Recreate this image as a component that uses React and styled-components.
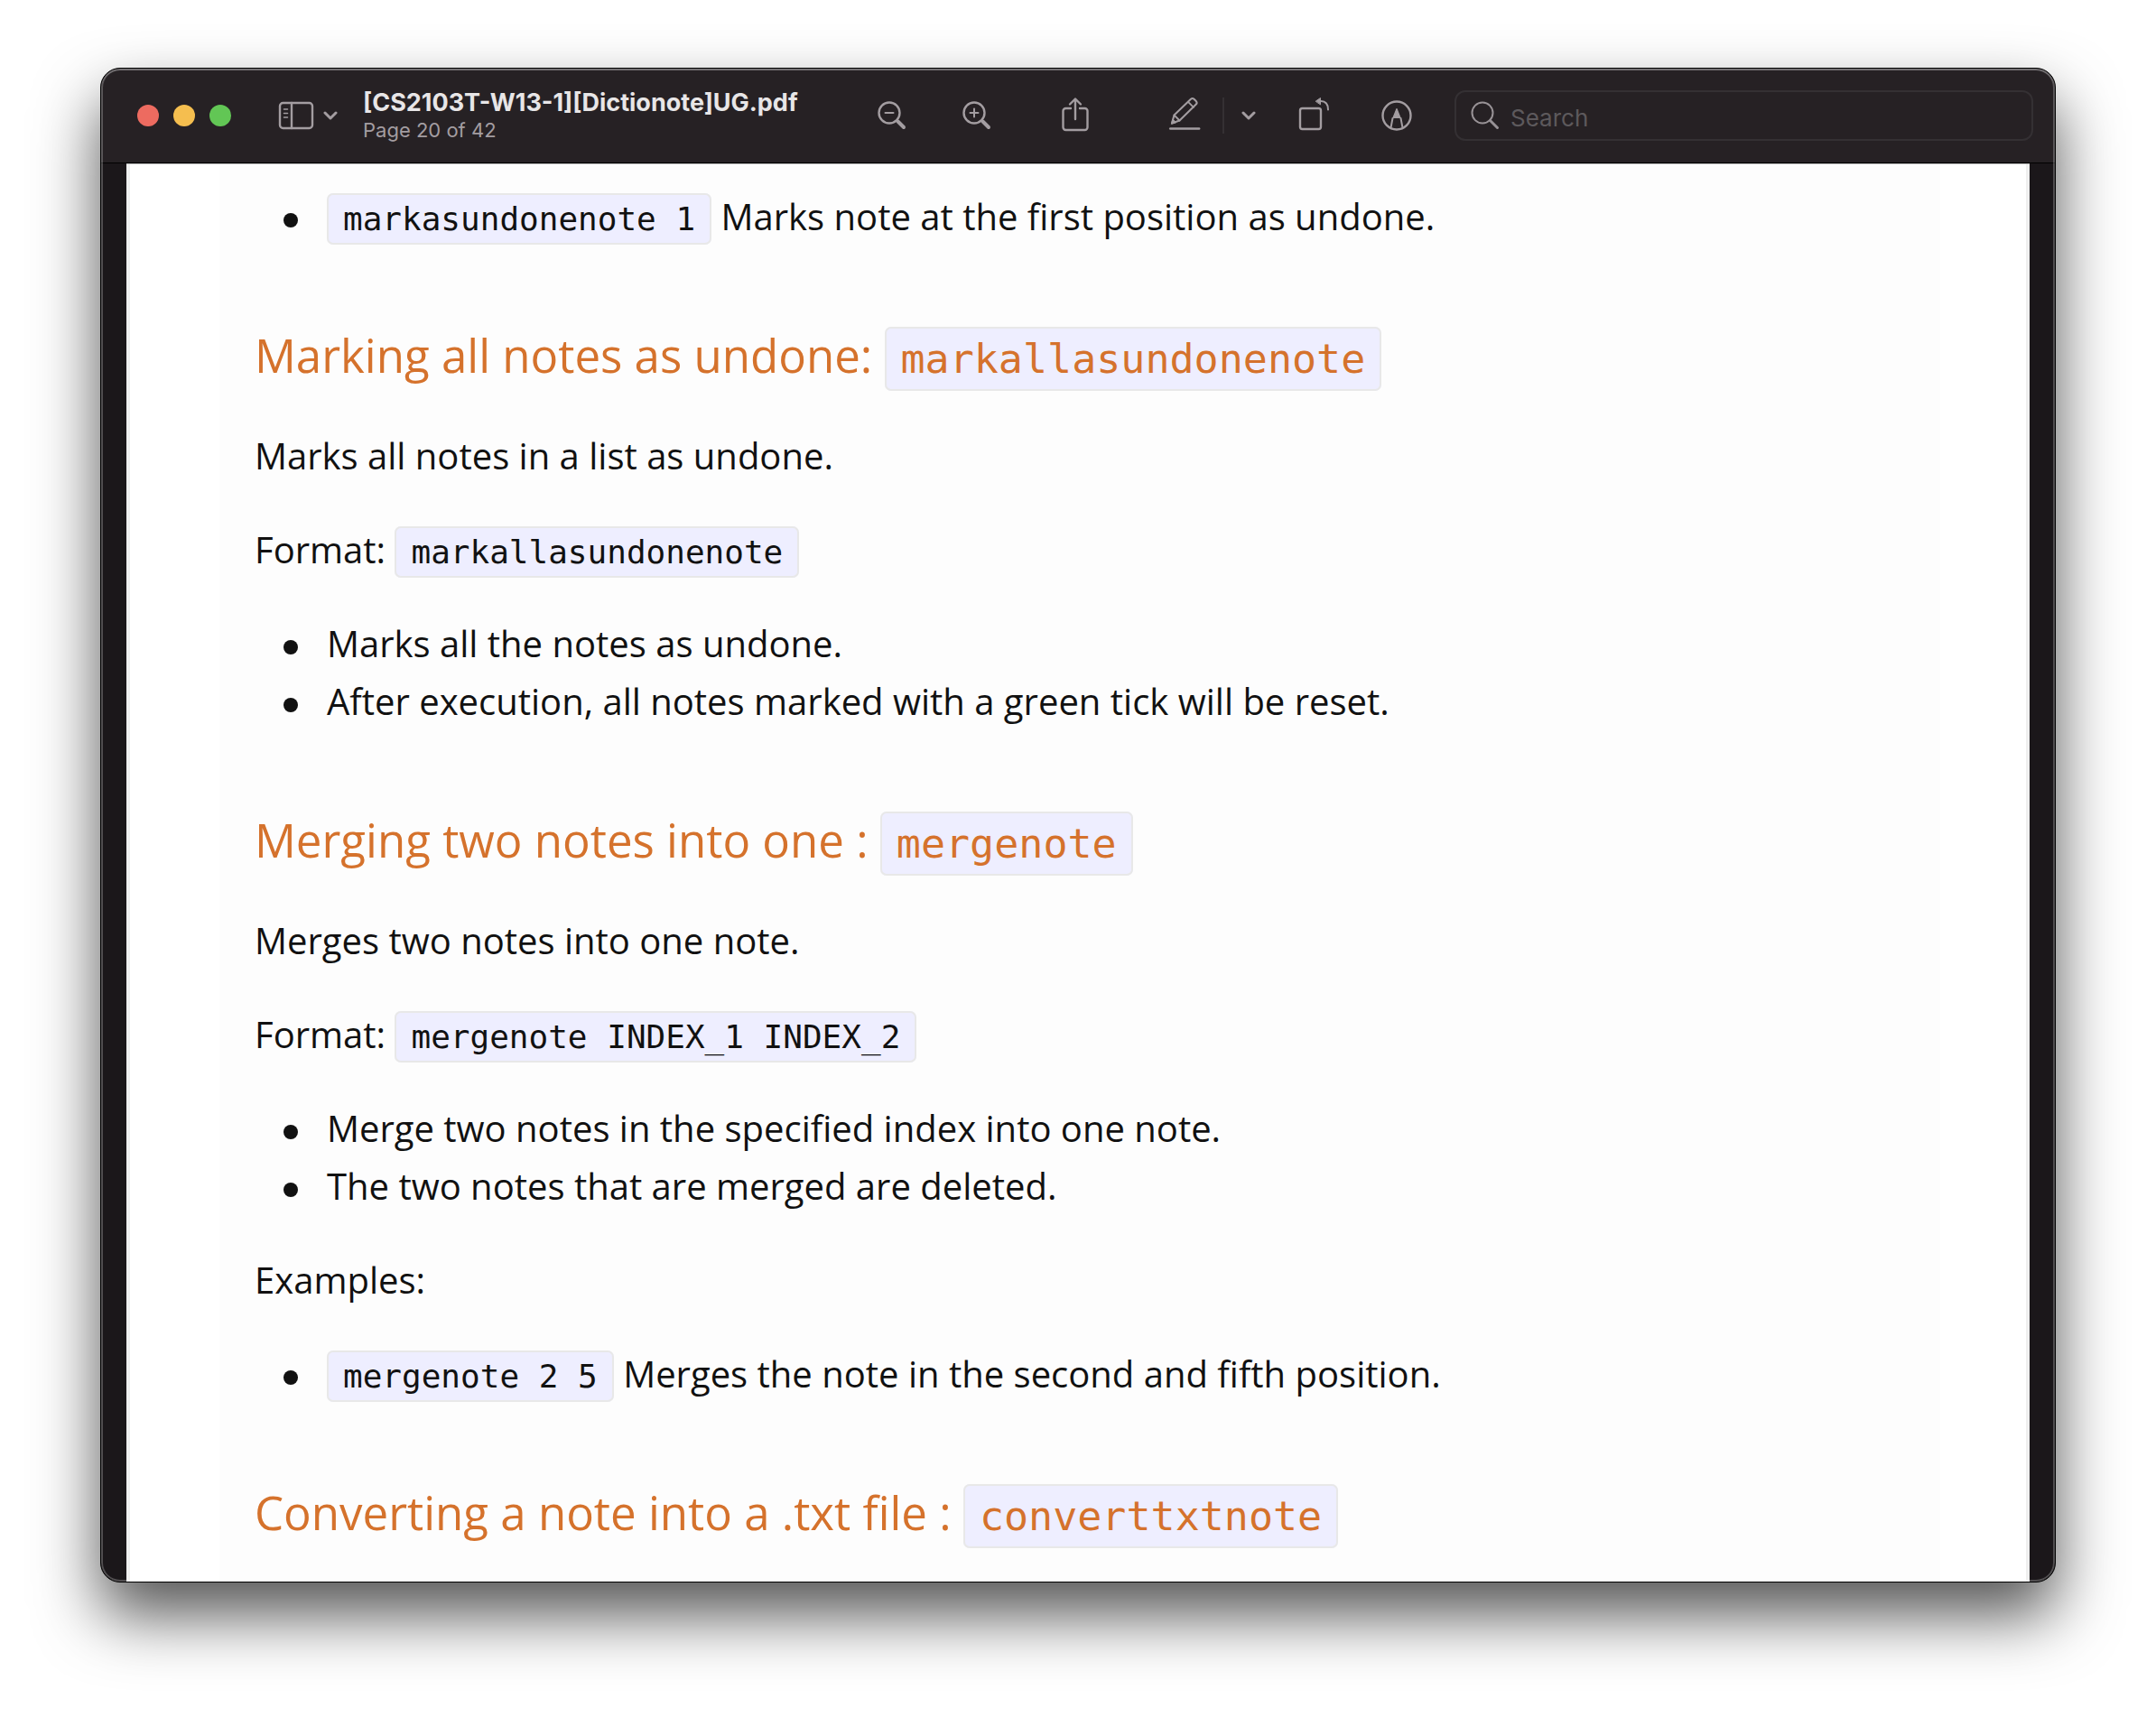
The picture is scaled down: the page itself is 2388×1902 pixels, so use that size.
import React from "react";
import styled, { createGlobalStyle } from "styled-components";

const GlobalStyle = createGlobalStyle`
  *, *::before, *::after { box-sizing: border-box; }
  body { margin: 0; background: #fff; }
`;

const Desktop = styled.main`
  padding: 75px 111px 147px;
`;

const Window = styled.section`
  position: relative;
  overflow: hidden;
  border: 1px solid #000;
  border-radius: 22px;
  background: #1b171a;
  box-shadow: 0 36px 70px rgba(0, 0, 0, 0.67);

  &::after {
    content: "";
    position: absolute;
    inset: 0;
    border-radius: 21px;
    box-shadow: inset 0 0 0 2px rgba(255, 255, 255, 0.24),
      inset 0 2px 0 rgba(255, 255, 255, 0.16);
    pointer-events: none;
  }
`;

const Toolbar = styled.header`
  display: flex;
  align-items: center;
  height: 105px;
  padding: 0 24px 0 40px;
  border-bottom: 1px solid #000;
  background: #262124;
  color: #a39da1;
  font-family: Inter, "Liberation Sans", sans-serif;
`;

const Lights = styled.div`
  display: flex;
  gap: 16px;
`;

const Light = styled.button`
  width: 24px;
  height: 24px;
  padding: 0;
  border: 0;
  border-radius: 50%;
  background: ${(p) => p.$color};
`;

const IconButton = styled.button`
  display: flex;
  flex: none;
  align-items: center;
  justify-content: center;
  width: ${(p) => p.$width || 44}px;
  height: 48px;
  margin-left: ${(p) => p.$gap || 0}px;
  padding: 0;
  border: 0;
  background: none;
  color: inherit;

  svg {
    display: block;
    fill: none;
    stroke: currentColor;
    stroke-width: 2.4;
    stroke-linecap: round;
    stroke-linejoin: round;
  }
`;

const Titles = styled.div`
  flex: none;
  width: 538px;
  margin-left: 26px;
`;

const Title = styled.h1`
  margin: 0;
  color: #e8e6e7;
  font-size: 27px;
  font-weight: 700;
  line-height: 32px;
  white-space: nowrap;
`;

const Subtitle = styled.p`
  margin: 0;
  font-size: 22px;
  line-height: 28px;
`;

const Divider = styled.span`
  flex: none;
  width: 2px;
  height: 40px;
  margin-left: 20px;
  background: #343033;
`;

const SearchField = styled.label`
  display: flex;
  flex: 1;
  align-items: center;
  gap: 12px;
  min-width: 0;
  height: 56px;
  margin-left: 42px;
  padding: 0 16px;
  border: 2px solid #343033;
  border-radius: 12px;

  svg {
    flex: none;
    fill: none;
    stroke: #989296;
    stroke-linecap: round;
  }
`;

const SearchInput = styled.input`
  flex: 1;
  min-width: 0;
  height: 40px;
  padding: 4px 0 0;
  border: 0;
  outline: 0;
  background: none;
  color: #e8e6e7;
  font: 400 26px/32px Inter, "Liberation Sans", sans-serif;

  &::placeholder {
    color: #5d595c;
    opacity: 1;
  }
`;

const Viewer = styled.div`
  padding: 0 28px;
`;

const Sheet = styled.div`
  padding: 0 99px 0 103px;
  border-top: 1px solid #b8b8b8;
  background: #fff;
  box-shadow: inset 4px 0 #efefef, inset -4px 0 #efefef;
`;

const Article = styled.article`
  padding: 26px 39px 42px;
  background: #fdfdfd;
  color: #111;
  font: 400 40px/64px "Open Sans", "Noto Sans", sans-serif;
`;

const Heading = styled.h2`
  margin: 86px 0 45px;
  color: #d5722c;
  font-size: 51px;
  font-weight: 400;
  line-height: 70px;

  &:last-child {
    margin-bottom: 0;
  }
`;

const Paragraph = styled.p`
  margin: 40px 0;
`;

const List = styled.ul`
  margin: 0;
  padding: 0 0 0 80px;
  list-style: none;
`;

const Item = styled.li`
  &::before {
    content: "";
    display: inline-block;
    width: 16px;
    height: 16px;
    margin: 0 32px 0 -48px;
    border-radius: 50%;
    background: #111;
    vertical-align: middle;
  }
`;

const Code = styled.code`
  padding: ${(p) => (p.$large ? 7 : 6)}px 16px;
  border: 2px solid #e8e8e8;
  border-radius: 7px;
  background: #eef;
  font-family: "DejaVu Sans Mono", monospace;
  font-size: ${(p) => (p.$large ? 45 : 36)}px;
  line-height: 1;
`;

const Chevron = () => (
  <svg width="16" height="12" viewBox="0 0 16 12">
    <path d="M2 3l6 6 6-6" strokeWidth="3" />
  </svg>
);

const Magnifier = ({ plus }) => (
  <svg width="32" height="32" viewBox="0 0 32 32">
    <circle cx="13" cy="13" r="11.5" />
    <path d="M8.500 13h9" strokeWidth="2" />
    {plus && <path d="M13 8.500v9" strokeWidth="2" />}
    <path d="M22.500 22.500l6.500 6.500" strokeWidth="4" />
  </svg>
);

export default function App() {
  return (
    <>
      <GlobalStyle />
      <Desktop>
        <Window>
          <Toolbar>
            <Lights>
              <Light $color="#ed6b60" aria-label="Close" />
              <Light $color="#f5be4f" aria-label="Minimize" />
              <Light $color="#62c655" aria-label="Zoom window" />
            </Lights>
            <IconButton $gap={50} aria-label="Sidebar">
              <svg width="40" height="32" viewBox="0 0 40 32">
                <rect x="2" y="2" width="36" height="28" rx="3.500" />
                <path d="M15 2v28" />
                <path d="M6.500 9h4M6.500 13.500h4M6.500 18h4" strokeWidth="1.6" />
              </svg>
            </IconButton>
            <IconButton $gap={6} $width={20} aria-label="Sidebar options">
              <Chevron />
            </IconButton>
            <Titles>
              <Title>[CS2103T-W13-1][Dictionote]UG.pdf</Title>
              <Subtitle>Page 20 of 42</Subtitle>
            </Titles>
            <IconButton $gap={26} aria-label="Zoom out">
              <Magnifier />
            </IconButton>
            <IconButton $gap={50} aria-label="Zoom in">
              <Magnifier plus />
            </IconButton>
            <IconButton $gap={65} aria-label="Share">
              <svg width="32" height="42" viewBox="0 0 32 42">
                <path d="M11 13H5.500a3 3 0 0 0-3 3v18a3 3 0 0 0 3 3h21a3 3 0 0 0 3-3V16a3 3 0 0 0-3-3H21" />
                <path d="M16 25V3M10 8.500L16 2.500l6 6" />
              </svg>
            </IconButton>
            <IconButton $gap={77} aria-label="Highlight">
              <svg width="36" height="42" viewBox="0 0 36 42">
                <path d="M2.200 35.500h32" />
                <path d="M4 29.500l2.500-9L25 2.800q1.800-1.600 3.500 0l2.300 2.300q1.600 1.800 0 3.500L12.500 26.500z" strokeWidth="2.1" />
                <path d="M22 5.800l6 6M6.500 20.500l6 6" strokeWidth="1.800" />
                <path d="M3.500 30l1.500-5 3.500 3.500z" fill="currentColor" strokeWidth="1" />
              </svg>
            </IconButton>
            <Divider />
            <IconButton $gap={17} $width={20} aria-label="Highlight colors">
              <Chevron />
            </IconButton>
            <IconButton $gap={40} aria-label="Rotate">
              <svg width="36" height="44" viewBox="0 0 36 44">
                <rect x="3" y="14" width="23" height="23" rx="2.500" />
                <path d="M26 6c5.500 0 8 3 8 9.500" strokeWidth="2" />
                <path d="M20.500 6l5-3.500v7z" fill="currentColor" strokeWidth="1" />
              </svg>
            </IconButton>
            <IconButton $gap={48} aria-label="Markup">
              <svg width="36" height="36" viewBox="0 0 36 36">
                <circle cx="18" cy="18" r="15.500" />
                <path d="M11.500 31.500L13.500 21M24.500 31.500L22.500 21" strokeWidth="2" />
                <path d="M18 10.500L14 20.500h8z" fill="currentColor" strokeWidth="1.200" />
              </svg>
            </IconButton>
            <SearchField>
              <svg width="32" height="32" viewBox="0 0 32 32">
                <circle cx="13" cy="13" r="11.500" strokeWidth="2" />
                <path d="M21.500 21.500l8 8" strokeWidth="3" />
              </svg>
              <SearchInput type="search" placeholder="Search" aria-label="Search" />
            </SearchField>
          </Toolbar>
          <Viewer>
            <Sheet>
              <Article>
                <List>
                  <Item>
                    <Code>markasundonenote 1</Code> Marks note at the first position as undone.
                  </Item>
                </List>
                <Heading>
                  Marking all notes as undone: <Code $large>markallasundonenote</Code>
                </Heading>
                <Paragraph>Marks all notes in a list as undone.</Paragraph>
                <Paragraph>
                  Format: <Code>markallasundonenote</Code>
                </Paragraph>
                <List>
                  <Item>Marks all the notes as undone.</Item>
                  <Item>After execution, all notes marked with a green tick will be reset.</Item>
                </List>
                <Heading>
                  Merging two notes into one : <Code $large>mergenote</Code>
                </Heading>
                <Paragraph>Merges two notes into one note.</Paragraph>
                <Paragraph>
                  Format: <Code>mergenote INDEX_1 INDEX_2</Code>
                </Paragraph>
                <List>
                  <Item>Merge two notes in the specified index into one note.</Item>
                  <Item>The two notes that are merged are deleted.</Item>
                </List>
                <Paragraph>Examples:</Paragraph>
                <List>
                  <Item>
                    <Code>mergenote 2 5</Code> Merges the note in the second and fifth position.
                  </Item>
                </List>
                <Heading>
                  Converting a note into a .txt file : <Code $large>converttxtnote</Code>
                </Heading>
              </Article>
            </Sheet>
          </Viewer>
        </Window>
      </Desktop>
    </>
  );
}
